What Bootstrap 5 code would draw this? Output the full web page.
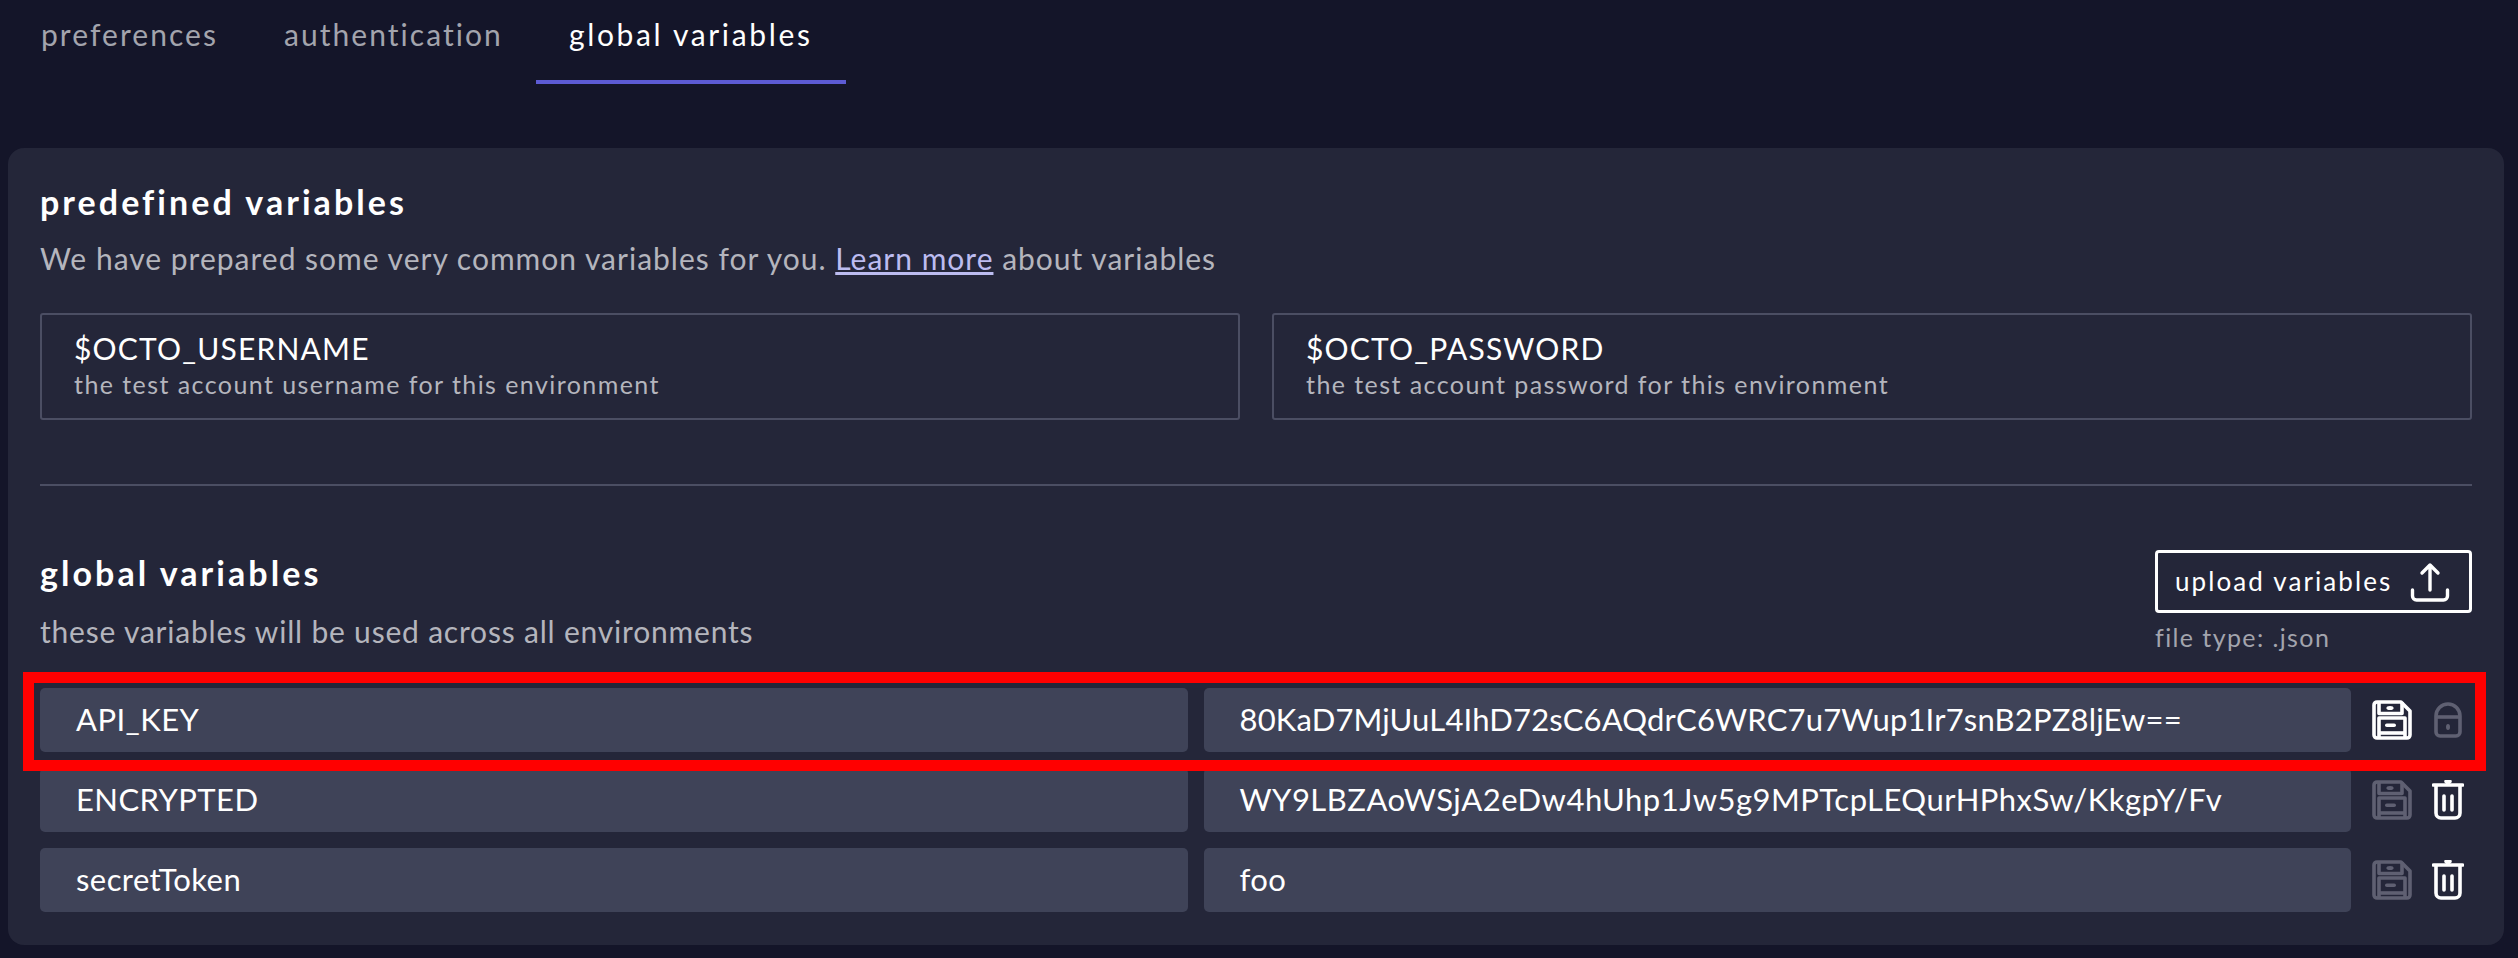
<!DOCTYPE html>
<html lang="en"><head><meta charset="utf-8"><title>global variables</title>
<link href="https://cdn.jsdelivr.net/npm/bootstrap@5.3.0/dist/css/bootstrap.min.css" rel="stylesheet">
<style>
html,body{height:100%}
body{background:#141529;color:#fff;font-family:"Lato","Liberation Sans",sans-serif;padding:0 14px 0 8px;overflow:hidden}
.tab-strip{margin-bottom:64px}
.tab-item{display:block;padding:9px 33px 21px;line-height:50px;font-size:30px;letter-spacing:2.05px;color:#a3a4ad;border-bottom:4px solid transparent;text-decoration:none}
.tab-item.is-on{color:#fff;border-bottom-color:#5d5bd4;letter-spacing:2.65px}
.panel{background:#242639;border-radius:16px;height:797px;padding:31px 32px 32px;position:relative}
.sec-title{font-size:34px;font-weight:700;line-height:46px;letter-spacing:3.05px;margin:0}
.sec-sub{font-size:30px;line-height:40px;color:#b4b5bd;margin:13px 0 0;letter-spacing:1px}
.sec-sub a{color:#bcbcf0}
.sub-gv{margin-top:15px;letter-spacing:.8px}
.pre-row{--bs-gutter-x:32px;margin-top:35px}
.pre-box{border:2px solid #4b4e63;border-radius:3px;height:107px;padding:15px 32px}
.pre-name{font-size:30px;line-height:36px;letter-spacing:1.2px}
.pre-desc{font-size:25px;line-height:34px;color:#b4b5bd;letter-spacing:1.43px;margin-top:1px}
.rule{border-top:2px solid #4b4e63;margin:64px 0 0;opacity:1}
.gv-head{margin-top:64px;height:138px}
.up-wrap{width:317px}
.up-btn{width:317px;height:63px;border:3px solid #fff;border-radius:4px;color:#fff;padding:0 19px 0 17px;font-size:26px;letter-spacing:2.1px;background:transparent}
.up-hint{font-size:25px;line-height:36px;color:#a3a4ad;letter-spacing:1.4px;margin-top:6px}
.gv-row{height:64px;margin-bottom:16px}
.gv-field{flex:1 1 0;background:#3f4358;border:0;border-radius:5px;color:#fff;font-size:31px;letter-spacing:.42px;line-height:62px;height:64px;padding:0 36px;min-width:0;white-space:nowrap;overflow:hidden}
.val-key{letter-spacing:.17px}
.val-enc{letter-spacing:.48px}
.gv-acts{width:105px;padding-left:5px}
.ic-dim{color:#5f6072}
.ic-on{color:#fff}
.ic-lock{margin-left:22px}
.ic-trash{margin-left:20px}
.mark-box{position:absolute;left:15px;right:18px;top:524px;height:99px;border:11px solid #f00;pointer-events:none}
</style></head>
<body>
<nav class="d-flex tab-strip">
<a class="tab-item" href="#">preferences</a><a class="tab-item" href="#">authentication</a><a class="tab-item is-on" href="#">global variables</a>
</nav>
<main class="panel">
<h2 class="sec-title">predefined variables</h2>
<p class="sec-sub">We have prepared some very common variables for you. <a href="#">Learn more</a> about variables</p>
<div class="row pre-row">
<div class="col-6"><div class="pre-box"><div class="pre-name">$OCTO_USERNAME</div><div class="pre-desc">the test account username for this environment</div></div></div>
<div class="col-6"><div class="pre-box"><div class="pre-name">$OCTO_PASSWORD</div><div class="pre-desc">the test account password for this environment</div></div></div>
</div>
<hr class="rule">
<div class="d-flex justify-content-between gv-head">
<div><h2 class="sec-title">global variables</h2><p class="sec-sub sub-gv">these variables will be used across all environments</p></div>
<div class="up-wrap">
<button class="btn up-btn d-flex align-items-center justify-content-between"><span>upload variables</span>
<svg width="40" height="40" viewBox="0 0 40 40" fill="none" stroke="currentColor" stroke-width="3.4" stroke-linecap="round" stroke-linejoin="round"><path d="M20 3V28M12 11L20 3L28 11"/><path d="M2.500 28V34a4 4 0 0 0 4 4H33.500a4 4 0 0 0 4-4V28"/></svg></button>
<div class="up-hint">file type: .json</div>
</div>
</div>
<div class="d-flex gap-3 gv-row"><div class="gv-field">API_KEY</div><div class="gv-field val-key">80KaD7MjUuL4IhD72sC6AQdrC6WRC7u7Wup1Ir7snB2PZ8ljEw==</div>
<div class="d-flex gv-acts align-items-center">
<svg class="ic-on" width="40" height="40" viewBox="0 0 40 40" fill="none" stroke="currentColor" stroke-width="3.6" stroke-linejoin="round"><path d="M5 2H29L38 11V35a3 3 0 0 1-3 3H5a3 3 0 0 1-3-3V5a3 3 0 0 1 3-3Z"/><path d="M7 2V13.500H30V2"/><path d="M7 38V18H33V38"/><path d="M7 33H33"/><ellipse cx="18" cy="8" rx="3.600" ry="2" fill="currentColor" stroke="none"/><rect x="13" y="23.500" width="11" height="3.600" rx="1.800" fill="currentColor" stroke="none"/></svg>
<svg class="ic-dim ic-lock" width="28" height="36" viewBox="0 0 28 36" fill="none" stroke="currentColor" stroke-width="3.6"><path d="M2 16V14a12 12 0 0 1 24 0V30a4 4 0 0 1-4 4H6a4 4 0 0 1-4-4Z"/><path d="M2 15H26"/><ellipse cx="14" cy="25" rx="2" ry="3" fill="currentColor" stroke="none"/></svg>
</div></div>
<div class="d-flex gap-3 gv-row"><div class="gv-field">ENCRYPTED</div><div class="gv-field val-enc">WY9LBZAoWSjA2eDw4hUhp1Jw5g9MPTcpLEQurHPhxSw/KkgpY/Fv</div>
<div class="d-flex gv-acts align-items-center">
<svg class="ic-dim" width="40" height="40" viewBox="0 0 40 40" fill="none" stroke="currentColor" stroke-width="3.6" stroke-linejoin="round"><path d="M5 2H29L38 11V35a3 3 0 0 1-3 3H5a3 3 0 0 1-3-3V5a3 3 0 0 1 3-3Z"/><path d="M7 2V13.500H30V2"/><path d="M7 38V18H33V38"/><path d="M7 33H33"/><ellipse cx="18" cy="8" rx="3.600" ry="2" fill="currentColor" stroke="none"/><rect x="13" y="23.500" width="11" height="3.600" rx="1.800" fill="currentColor" stroke="none"/></svg>
<svg class="ic-on ic-trash" width="32" height="40" viewBox="0 0 32 40" fill="none" stroke="currentColor" stroke-width="3.6" stroke-linecap="round"><path d="M1.500 5H30.500M14 1.500H18"/><path d="M4 6V33a5 5 0 0 0 5 5H23a5 5 0 0 0 5-5V6"/><path d="M12 16V30M20 16V30"/></svg>
</div></div>
<div class="d-flex gap-3 gv-row"><div class="gv-field">secretToken</div><div class="gv-field">foo</div>
<div class="d-flex gv-acts align-items-center">
<svg class="ic-dim" width="40" height="40" viewBox="0 0 40 40" fill="none" stroke="currentColor" stroke-width="3.6" stroke-linejoin="round"><path d="M5 2H29L38 11V35a3 3 0 0 1-3 3H5a3 3 0 0 1-3-3V5a3 3 0 0 1 3-3Z"/><path d="M7 2V13.500H30V2"/><path d="M7 38V18H33V38"/><path d="M7 33H33"/><ellipse cx="18" cy="8" rx="3.600" ry="2" fill="currentColor" stroke="none"/><rect x="13" y="23.500" width="11" height="3.600" rx="1.800" fill="currentColor" stroke="none"/></svg>
<svg class="ic-on ic-trash" width="32" height="40" viewBox="0 0 32 40" fill="none" stroke="currentColor" stroke-width="3.6" stroke-linecap="round"><path d="M1.500 5H30.500M14 1.500H18"/><path d="M4 6V33a5 5 0 0 0 5 5H23a5 5 0 0 0 5-5V6"/><path d="M12 16V30M20 16V30"/></svg>
</div></div>
<div class="mark-box"></div>
</main>
<script src="https://cdn.jsdelivr.net/npm/bootstrap@5.3.0/dist/js/bootstrap.bundle.min.js"></script>
</body></html>
